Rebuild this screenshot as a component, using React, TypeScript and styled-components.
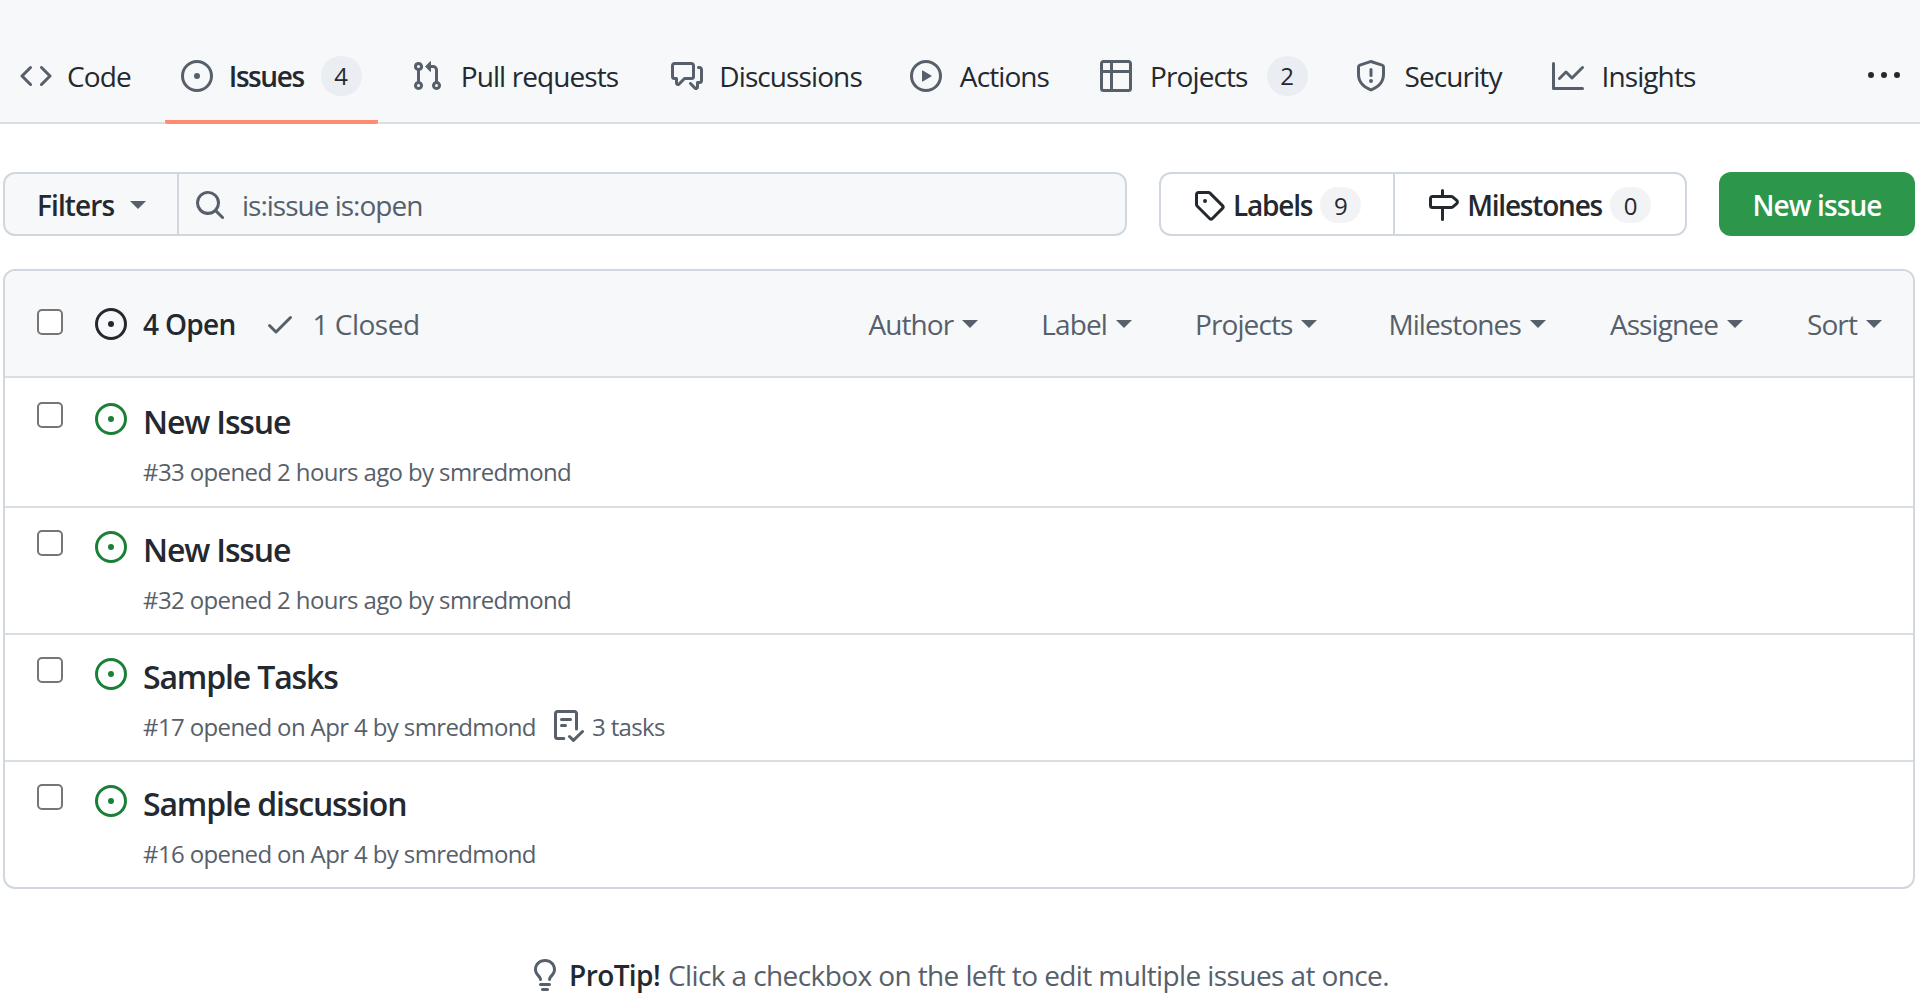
import React from 'react'
import styled, { createGlobalStyle } from 'styled-components'

const GlobalStyle = createGlobalStyle`
  html, body {
    margin: 0;
    padding: 0;
    background: #fff;
    font-family: "Open Sans", "Noto Sans", sans-serif;
    color: #24292f;
  }
  * { box-sizing: border-box; }
`

const paths: Record<string, string> = {
  code: 'm11.28 3.22 4.25 4.25a.75.75 0 0 1 0 1.06l-4.25 4.25a.749.749 0 0 1-1.275-.326.749.749 0 0 1 .215-.734L13.94 8l-3.72-3.72a.749.749 0 0 1 .326-1.275.749.749 0 0 1 .734.215Zm-6.56 0a.751.751 0 0 1 1.042.018.751.751 0 0 1 .018 1.042L2.06 8l3.72 3.72a.749.749 0 0 1-.326 1.275.749.749 0 0 1-.734-.215L.47 8.53a.75.75 0 0 1 0-1.06Z',
  issue: 'M8 9.5a1.5 1.5 0 1 0 0-3 1.5 1.5 0 0 0 0 3Z M8 0a8 8 0 1 1 0 16A8 8 0 0 1 8 0ZM1.5 8a6.5 6.5 0 1 0 13 0 6.5 6.5 0 0 0-13 0Z',
  pull: 'M1.5 3.25a2.25 2.25 0 1 1 3 2.122v5.256a2.251 2.251 0 1 1-1.5 0V5.372A2.25 2.25 0 0 1 1.5 3.25Zm5.677-.177L9.573.677A.25.25 0 0 1 10 .854V2.5h1A2.5 2.5 0 0 1 13.5 5v5.628a2.251 2.251 0 1 1-1.5 0V5a1 1 0 0 0-1-1h-1v1.646a.25.25 0 0 1-.427.177L7.177 3.427a.25.25 0 0 1 0-.354ZM3.75 2.5a.75.75 0 1 0 0 1.5.75.75 0 0 0 0-1.5Zm0 9.5a.75.75 0 1 0 0 1.5.75.75 0 0 0 0-1.5Zm8.25.75a.75.75 0 1 0 1.5 0 .75.75 0 0 0-1.5 0Z',
  discussion: 'M1.75 1h8.5c.966 0 1.75.784 1.75 1.75v5.5A1.75 1.75 0 0 1 10.25 10H7.061l-2.574 2.573A1.458 1.458 0 0 1 2 11.543V10h-.25A1.75 1.75 0 0 1 0 8.25v-5.5C0 1.784.784 1 1.75 1ZM1.5 2.75v5.5c0 .138.112.25.25.25h1a.75.75 0 0 1 .75.75v2.19l2.72-2.72a.749.749 0 0 1 .53-.22h3.5a.25.25 0 0 0 .25-.25v-5.5a.25.25 0 0 0-.25-.25h-8.5a.25.25 0 0 0-.25.25Zm13 2a.25.25 0 0 0-.25-.25h-.5a.75.75 0 0 1 0-1.5h.5c.966 0 1.75.784 1.75 1.75v5.5A1.75 1.75 0 0 1 14.25 12H14v1.543a1.458 1.458 0 0 1-2.487 1.03L9.22 12.28a.749.749 0 0 1 .326-1.275.749.749 0 0 1 .734.215l2.22 2.22v-2.19a.75.75 0 0 1 .75-.75h1a.25.25 0 0 0 .25-.25Z',
  play: 'M8 0a8 8 0 1 1 0 16A8 8 0 0 1 8 0ZM1.5 8a6.5 6.5 0 1 0 13 0 6.5 6.5 0 0 0-13 0Zm4.879-2.773 4.264 2.559a.25.25 0 0 1 0 .428l-4.264 2.559A.25.25 0 0 1 6 10.559V5.442a.25.25 0 0 1 .379-.215Z',
  table: 'M0 1.75C0 .784.784 0 1.75 0h12.5C15.216 0 16 .784 16 1.75v12.5A1.75 1.75 0 0 1 14.25 16H1.75A1.75 1.75 0 0 1 0 14.25ZM6.5 6.5v8h7.75a.25.25 0 0 0 .25-.25V6.5Zm8-1.5V1.75a.25.25 0 0 0-.25-.25H6.5V5Zm-13 1.5v7.75c0 .138.112.25.25.25H5v-8ZM5 5V1.5H1.75a.25.25 0 0 0-.25.25V5Z',
  shield: 'M7.467.133a1.748 1.748 0 0 1 1.066 0l5.25 1.68A1.75 1.75 0 0 1 15 3.48V7c0 1.566-.32 3.182-1.303 4.682-.983 1.498-2.585 2.813-5.032 3.855a1.697 1.697 0 0 1-1.33 0c-2.447-1.042-4.049-2.357-5.032-3.855C1.32 10.182 1 8.566 1 7V3.48a1.75 1.75 0 0 1 1.217-1.667Zm.61 1.429a.25.25 0 0 0-.153 0l-5.25 1.68a.25.25 0 0 0-.174.238V7c0 1.358.275 2.666 1.057 3.86.784 1.194 2.121 2.34 4.366 3.297a.196.196 0 0 0 .154 0c2.245-.956 3.582-2.104 4.366-3.298C13.225 9.666 13.5 8.36 13.5 7V3.48a.251.251 0 0 0-.174-.237l-5.25-1.68ZM8.75 4.75v3a.75.75 0 0 1-1.5 0v-3a.75.75 0 0 1 1.5 0ZM9 10.5a1 1 0 1 1-2 0 1 1 0 0 1 2 0Z',
  graph: 'M1.5 1.75V13.5h13.75a.75.75 0 0 1 0 1.5H.75a.75.75 0 0 1-.75-.75V1.75a.75.75 0 0 1 1.5 0Zm14.28 2.53-5.25 5.25a.75.75 0 0 1-1.06 0L7 7.06 4.28 9.78a.751.751 0 0 1-1.042-.018.751.751 0 0 1-.018-1.042l3.25-3.25a.75.75 0 0 1 1.06 0L10 7.94l4.72-4.72a.751.751 0 0 1 1.042.018.751.751 0 0 1 .018 1.042Z',
  kebab: 'M8 9a1.5 1.5 0 1 0 0-3 1.5 1.5 0 0 0 0 3ZM1.5 9a1.5 1.5 0 1 0 0-3 1.5 1.5 0 0 0 0 3Zm13 0a1.5 1.5 0 1 0 0-3 1.5 1.5 0 0 0 0 3Z',
  search: 'M10.68 11.74a6 6 0 0 1-7.922-8.982 6 6 0 0 1 8.982 7.922l3.04 3.04a.749.749 0 0 1-.326 1.275.749.749 0 0 1-.734-.215ZM11.5 7a4.499 4.499 0 1 0-8.997 0A4.499 4.499 0 0 0 11.5 7Z',
  tag: 'M1 7.775V2.75C1 1.784 1.784 1 2.75 1h5.025c.464 0 .91.184 1.238.513l6.25 6.25a1.75 1.75 0 0 1 0 2.474l-5.026 5.026a1.75 1.75 0 0 1-2.474 0l-6.25-6.25A1.752 1.752 0 0 1 1 7.775Zm1.5 0c0 .066.026.13.073.177l6.25 6.25a.25.25 0 0 0 .354 0l5.025-5.025a.25.25 0 0 0 0-.354l-6.25-6.25a.25.25 0 0 0-.177-.073H2.75a.25.25 0 0 0-.25.25ZM6 5a1 1 0 1 1 0 2 1 1 0 0 1 0-2Z',
  milestone: 'M7.75 0a.75.75 0 0 1 .75.75V3h3.634c.414 0 .814.147 1.13.414l2.07 1.75a1.75 1.75 0 0 1 0 2.672l-2.07 1.75a1.75 1.75 0 0 1-1.13.414H8.5v5.25a.75.75 0 0 1-1.5 0V10H2.75A1.75 1.75 0 0 1 1 8.25v-3.5C1 3.784 1.784 3 2.75 3H7V.75A.75.75 0 0 1 7.75 0Zm4.384 8.5a.25.25 0 0 0 .161-.06l2.07-1.75a.248.248 0 0 0 0-.38l-2.07-1.75a.25.25 0 0 0-.161-.06H2.75a.25.25 0 0 0-.25.25v3.5c0 .138.112.25.25.25h9.384Z',
  check: 'M13.78 4.22a.75.75 0 0 1 0 1.06l-7.25 7.25a.75.75 0 0 1-1.06 0L2.22 9.28a.751.751 0 0 1 .018-1.042.751.751 0 0 1 1.042-.018L6 10.94l6.72-6.72a.75.75 0 0 1 1.06 0Z',
  checklist: 'M2.5 1.75v11.5c0 .138.112.25.25.25h3.17a.75.75 0 0 1 0 1.5H2.75A1.75 1.75 0 0 1 1 13.25V1.75C1 .784 1.784 0 2.75 0h8.5C12.216 0 13 .784 13 1.75v7.736a.75.75 0 0 1-1.5 0V1.75a.25.25 0 0 0-.25-.25h-8.5a.25.25 0 0 0-.25.25Zm13.274 9.537v-.001l-4.557 4.45a.75.75 0 0 1-1.055-.008l-1.943-1.95a.75.75 0 0 1 1.062-1.058l1.419 1.425 4.026-3.932a.75.75 0 1 1 1.048 1.074ZM4.75 4h4.5a.75.75 0 0 1 0 1.5h-4.5a.75.75 0 0 1 0-1.5ZM4 7.75A.75.75 0 0 1 4.75 7h2a.75.75 0 0 1 0 1.5h-2A.75.75 0 0 1 4 7.75Z',
  bulb: 'M8 1.5c-2.363 0-4 1.69-4 3.75 0 .984.424 1.625.984 2.304l.214.253c.223.264.47.556.673.848.284.411.537.896.621 1.49a.75.75 0 0 1-1.484.211c-.04-.282-.163-.547-.37-.847a8.456 8.456 0 0 0-.542-.68c-.084-.1-.173-.205-.268-.32C3.201 7.75 2.5 6.766 2.5 5.25 2.5 2.31 4.863 0 8 0s5.5 2.31 5.5 5.25c0 1.516-.701 2.5-1.328 3.259-.095.115-.184.22-.268.319-.207.245-.383.453-.541.681-.208.3-.33.565-.37.847a.751.751 0 0 1-1.485-.212c.084-.593.337-1.078.621-1.489.203-.292.45-.584.673-.848.075-.088.147-.173.213-.253.561-.679.985-1.32.985-2.304 0-2.06-1.637-3.75-4-3.75ZM5.75 12h4.5a.75.75 0 0 1 0 1.5h-4.5a.75.75 0 0 1 0-1.5ZM6 15.25a.75.75 0 0 1 .75-.75h2.5a.75.75 0 0 1 0 1.5h-2.5a.75.75 0 0 1-.75-.75Z',
}

const Octicon = ({ name, size = 32, color = '#57606a' }: { name: string; size?: number; color?: string }) => (
  <svg width={size} height={size} viewBox="0 0 16 16" fill={color} style={{ flex: 'none' }}>
    <path fillRule="evenodd" d={paths[name]} />
  </svg>
)

const TabNav = styled.nav`
  height: 124px;
  padding: 33px 0 0 4px;
  background: #f6f8fa;
  border-bottom: 2px solid #d8dee4;
  display: flex;
  align-items: flex-start;
  position: relative;
`

const Tab = styled.a<{ $active?: boolean; $after: number; $inner: number }>`
  height: 91px;
  margin-right: ${({ $after }) => $after}px;
  padding: 0 16px 2px;
  display: flex;
  align-items: center;
  gap: ${({ $inner }) => $inner}px;
  font-size: 28px;
  letter-spacing: ${({ $active }) => ($active ? '-1.4px' : '-0.9px')};
  color: #24292f;
  font-weight: ${({ $active }) => ($active ? 600 : 400)};
  border-bottom: 4px solid ${({ $active }) => ($active ? '#fd8c73' : 'transparent')};
  border-radius: 0 0 2px 2px;
`

const CounterBadge = styled.span`
  min-width: 41px;
  height: 40px;
  margin-left: 1px;
  border-radius: 20px;
  background: #eaeef2;
  font-size: 24px;
  font-weight: 400;
  letter-spacing: 0;
  display: flex;
  align-items: center;
  justify-content: center;
`

const More = styled.div`
  position: absolute;
  right: 20px;
  top: 60px;
  display: flex;
`

const Main = styled.main`
  padding: 48px 5px 0 3px;
`

const Toolbar = styled.div`
  height: 64px;
  display: flex;
  gap: 32px;
`

const SearchGroup = styled.div`
  width: 1124px;
  height: 64px;
  display: flex;
  background: #f6f8fa;
  border: 2px solid #d0d7de;
  border-radius: 12px;
`

const FiltersButton = styled.div`
  width: 174px;
  padding: 2px 0 0 32px;
  display: flex;
  align-items: center;
  gap: 16px;
  border-right: 2px solid #d0d7de;
  font-size: 28px;
  font-weight: 600;
  letter-spacing: -0.9px;
`

const Caret = styled.span`
  width: 0;
  height: 0;
  flex: none;
  border-style: solid;
  border-width: 8px 8px 0;
  border-color: #57606a transparent transparent;
`

const SearchField = styled.div`
  flex: 1;
  padding: 2px 0 0 15px;
  display: flex;
  align-items: center;
  gap: 16px;
  font-size: 28px;
  letter-spacing: -1px;
  color: #57606a;
`

const LinkGroup = styled.div`
  width: 528px;
  display: flex;
  background: #fff;
  border: 2px solid #d0d7de;
  border-radius: 12px;
`

const GroupLink = styled.div<{ $width: number }>`
  width: ${({ $width }) => $width}px;
  padding: 2px 0 0 32px;
  display: flex;
  align-items: center;
  gap: 8px;
  font-size: 28px;
  font-weight: 600;
  letter-spacing: -1.2px;
  & + & {
    border-left: 2px solid #d0d7de;
  }
`

const SmallBadge = styled.span`
  width: 41px;
  height: 36px;
  border-radius: 18px;
  background: #f1f3f5;
  font-size: 24px;
  font-weight: 400;
  letter-spacing: 0;
  display: flex;
  align-items: center;
  justify-content: center;
`

const NewIssue = styled.div`
  width: 196px;
  height: 64px;
  padding-top: 2px;
  background: #2c974b;
  border-radius: 12px;
  color: #fff;
  font-size: 28px;
  font-weight: 600;
  letter-spacing: -0.9px;
  display: flex;
  align-items: center;
  justify-content: center;
`

const IssueBox = styled.section`
  margin-top: 33px;
  border: 2px solid #d0d7de;
  border-radius: 12px;
  overflow: hidden;
`

const BoxHeader = styled.header`
  height: 105px;
  padding: 0 31px 0 32px;
  background: #f6f8fa;
  display: flex;
  align-items: center;
  font-size: 28px;
`

const CheckBox = styled.input.attrs({ type: 'checkbox' })`
  appearance: none;
  width: 26px;
  height: 26px;
  margin: 0;
  flex: none;
  background: #fff;
  border: 2px solid #767676;
  border-radius: 5px;
`

const HeaderCheck = styled(CheckBox)`
  margin: 0 32px 4px 0;
`

const StateLink = styled.span<{ $active?: boolean }>`
  display: flex;
  align-items: center;
  gap: 16px;
  margin-right: 29px;
  letter-spacing: ${({ $active }) => ($active ? '-0.7px' : '-0.5px')};
  color: ${({ $active }) => ($active ? '#24292f' : '#57606a')};
  font-weight: ${({ $active }) => ($active ? 600 : 400)};
`

const Filters = styled.div`
  margin-left: auto;
  display: flex;
  gap: 64px;
  color: #57606a;
  letter-spacing: -0.9px;
`

const FilterItem = styled.span<{ $after: number }>`
  display: flex;
  align-items: center;
  gap: 9px;
  margin-right: ${({ $after }) => $after}px;
`

const IssueRow = styled.article`
  height: 127px;
  border-top: 2px solid #d8dee4;
  padding: 22px 0 0 32px;
  display: flex;
  align-items: flex-start;
  &:first-of-type {
    height: 130px;
    padding-top: 24px;
  }
  > svg {
    margin-top: 1px;
  }
`

const RowCheck = styled(CheckBox)`
  margin: 0 32px 0 0;
`

const IssueBody = styled.div`
  margin-left: 16px;
`

const IssueTitle = styled.div`
  margin-top: -2px;
  font-size: 32px;
  line-height: 44px;
  font-weight: 600;
  letter-spacing: -1.15px;
`

const IssueMeta = styled.div`
  margin-top: 9px;
  display: flex;
  align-items: center;
  height: 36px;
  font-size: 24px;
  letter-spacing: -0.62px;
  color: #57606a;
`

const TaskCount = styled.span`
  margin-left: 16px;
  display: flex;
  align-items: center;
  gap: 8px;
`

const ProTip = styled.p`
  margin: 67px 0 0;
  display: flex;
  justify-content: center;
  align-items: center;
  gap: 8px;
  font-size: 28px;
  letter-spacing: -0.6px;
  color: #57606a;
  b {
    color: #24292f;
    font-weight: 600;
    margin-right: 8px;
  }
`

const tabs = [
  { icon: 'code', label: 'Code', inner: 15, after: 18 },
  { icon: 'issue', label: 'Issues', count: 4, active: true, inner: 16, after: 17 },
  { icon: 'pull', label: 'Pull requests', inner: 18, after: 21 },
  { icon: 'discussion', label: 'Discussions', inner: 16, after: 16 },
  { icon: 'play', label: 'Actions', inner: 18, after: 19 },
  { icon: 'table', label: 'Projects', count: 2, inner: 18, after: 15 },
  { icon: 'shield', label: 'Security', inner: 18, after: 18 },
  { icon: 'graph', label: 'Insights', inner: 18, after: 0 },
]

const issues = [
  { title: 'New Issue', meta: '#33 opened 2 hours ago by smredmond' },
  { title: 'New Issue', meta: '#32 opened 2 hours ago by smredmond' },
  { title: 'Sample Tasks', meta: '#17 opened on Apr 4 by smredmond', tasks: '3 tasks' },
  { title: 'Sample discussion', meta: '#16 opened on Apr 4 by smredmond' },
]

const filterItems = [
  { name: 'Author', after: -1 },
  { name: 'Label', after: -1 },
  { name: 'Projects', after: 7 },
  { name: 'Milestones', after: 0 },
  { name: 'Assignee', after: 0 },
  { name: 'Sort', after: 0 },
]

export default function App() {
  return (
    <>
      <GlobalStyle />
      <TabNav>
        {tabs.map((t) => (
          <Tab key={t.label} $active={t.active} $after={t.after} $inner={t.inner}>
            <Octicon name={t.icon} />
            {t.label}
            {t.count !== undefined && <CounterBadge>{t.count}</CounterBadge>}
          </Tab>
        ))}
        <More>
          <Octicon name="kebab" size={32} color="#24292f" />
        </More>
      </TabNav>
      <Main>
        <Toolbar>
          <SearchGroup>
            <FiltersButton>
              Filters <Caret />
            </FiltersButton>
            <SearchField>
              <Octicon name="search" />
              is:issue is:open
            </SearchField>
          </SearchGroup>
          <LinkGroup>
            <GroupLink $width={233}>
              <Octicon name="tag" color="#24292f" />
              Labels
              <SmallBadge>9</SmallBadge>
            </GroupLink>
            <GroupLink $width={293}>
              <Octicon name="milestone" color="#24292f" />
              Milestones
              <SmallBadge>0</SmallBadge>
            </GroupLink>
          </LinkGroup>
          <NewIssue>New issue</NewIssue>
        </Toolbar>
        <IssueBox>
          <BoxHeader>
            <HeaderCheck />
            <StateLink $active>
              <Octicon name="issue" color="#24292f" />
              4 Open
            </StateLink>
            <StateLink>
              <Octicon name="check" />
              1 Closed
            </StateLink>
            <Filters>
              {filterItems.map((item) => (
                <FilterItem key={item.name} $after={item.after}>
                  {item.name}
                  <Caret />
                </FilterItem>
              ))}
            </Filters>
          </BoxHeader>
          {issues.map((issue) => (
            <IssueRow key={issue.meta}>
              <RowCheck />
              <Octicon name="issue" color="#1a7f37" />
              <IssueBody>
                <IssueTitle>{issue.title}</IssueTitle>
                <IssueMeta>
                  {issue.meta}
                  {issue.tasks && (
                    <TaskCount>
                      <Octicon name="checklist" />
                      {issue.tasks}
                    </TaskCount>
                  )}
                </IssueMeta>
              </IssueBody>
            </IssueRow>
          ))}
        </IssueBox>
        <ProTip>
          <Octicon name="bulb" />
          <span>
            <b>ProTip!</b>Click a checkbox on the left to edit multiple issues at once.
          </span>
        </ProTip>
      </Main>
    </>
  )
}
